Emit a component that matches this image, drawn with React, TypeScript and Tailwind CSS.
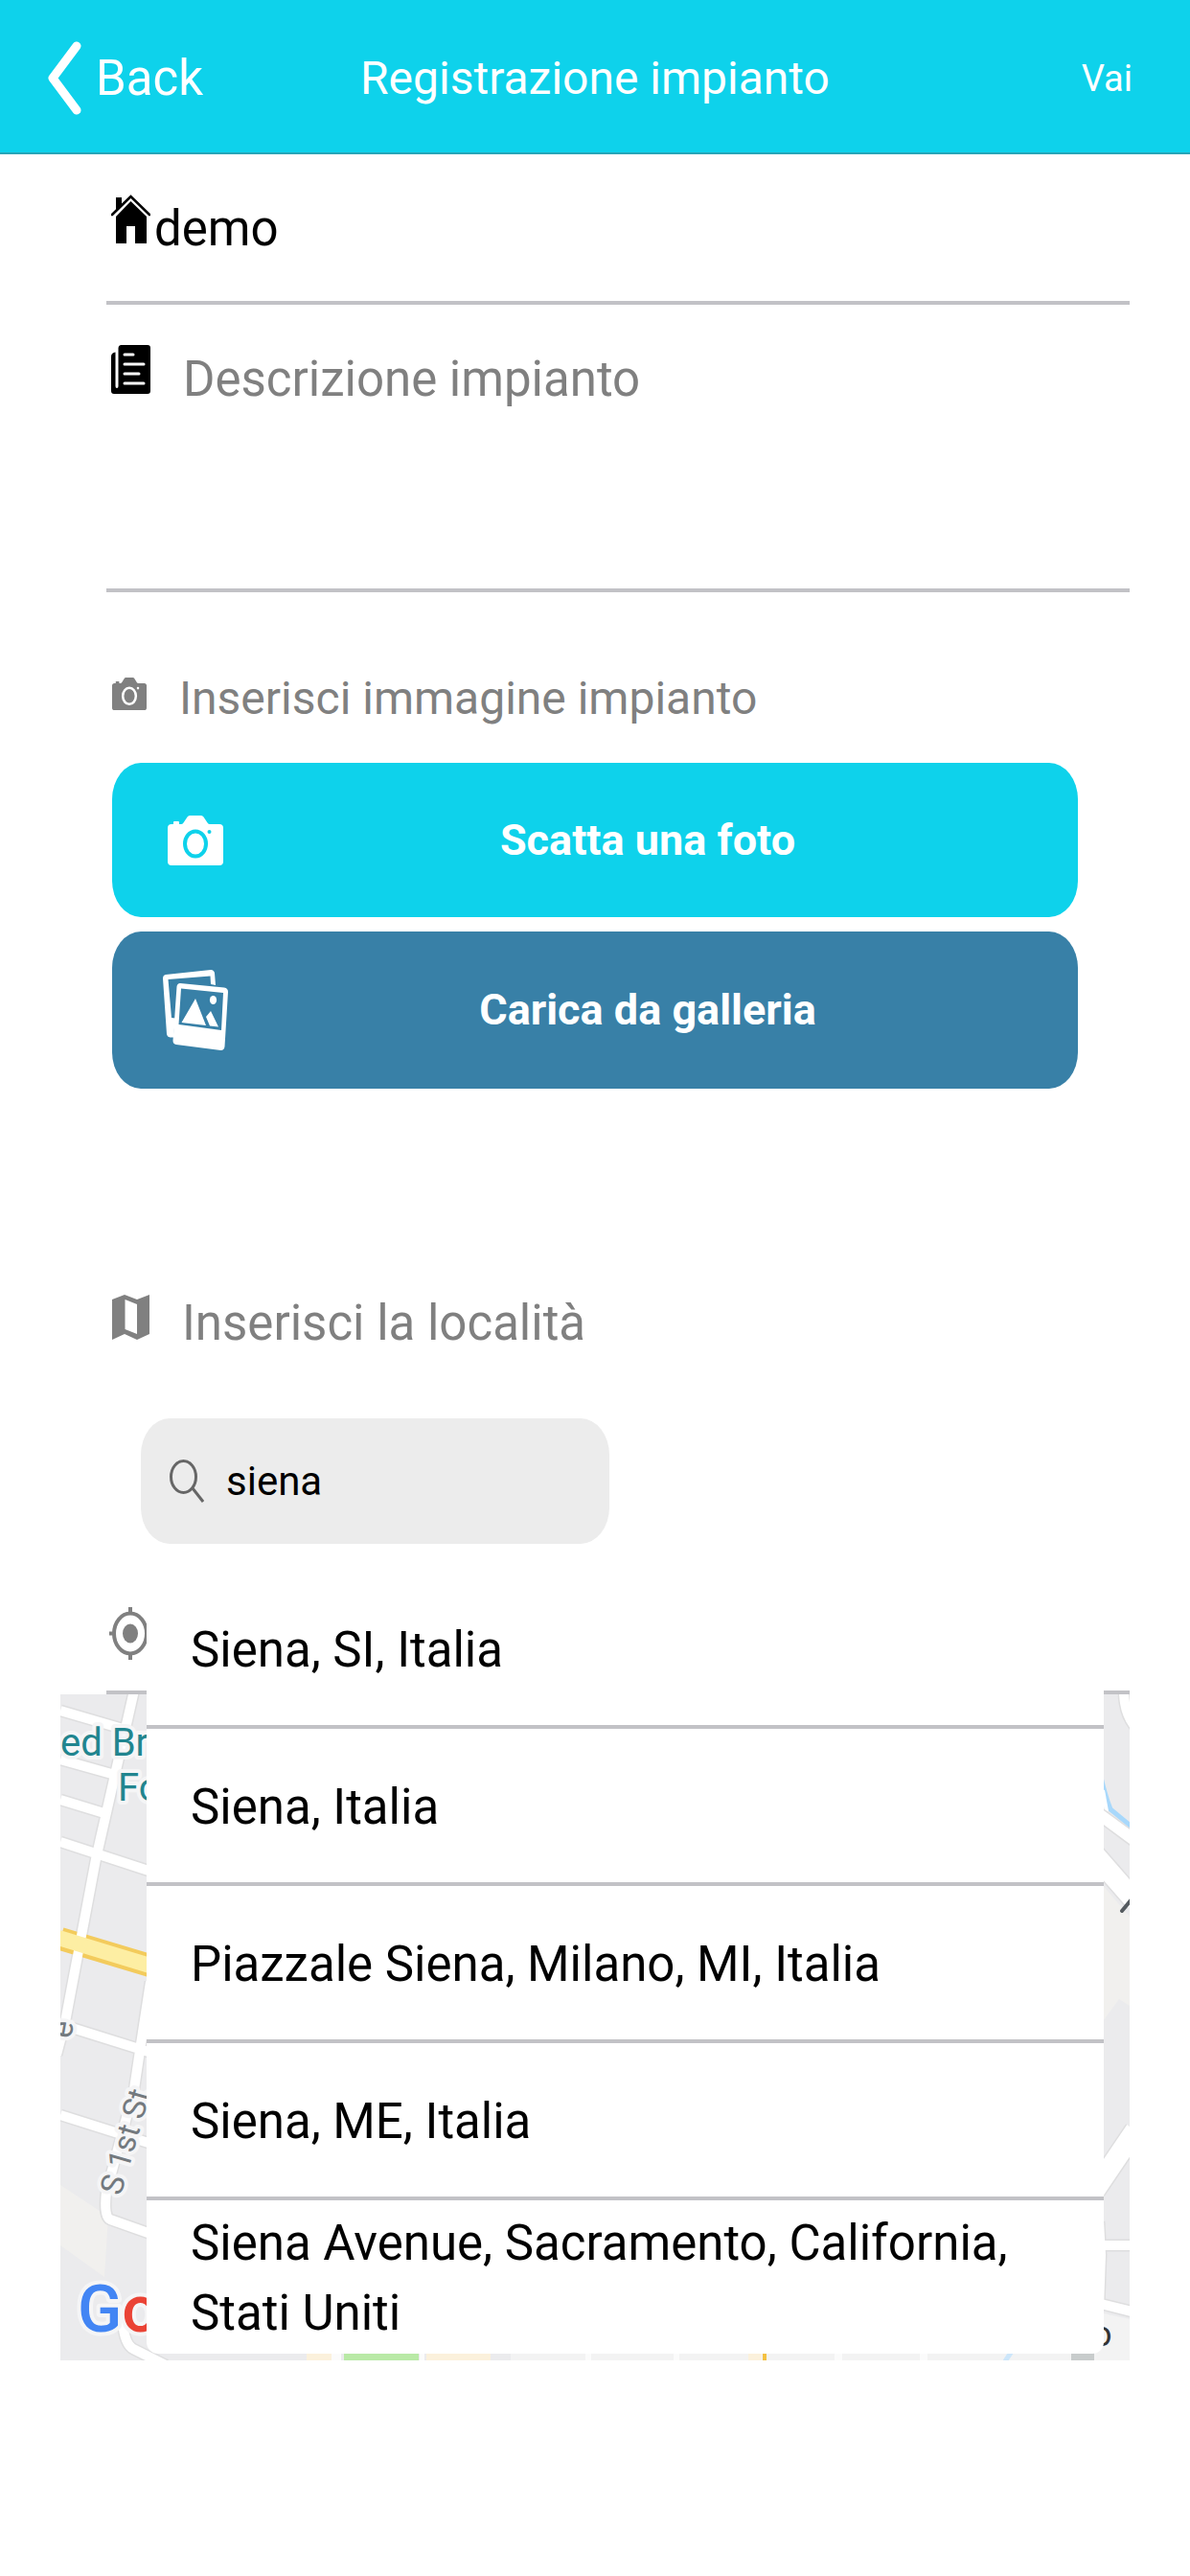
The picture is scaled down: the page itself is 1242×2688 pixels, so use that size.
import { useState } from "react";
import type { ReactNode } from "react";

const results = [
  "Siena, SI, Italia",
  "Siena, Italia",
  "Piazzale Siena, Milano, MI, Italia",
  "Siena, ME, Italia",
  "Siena Avenue, Sacramento, California, Stati Uniti",
];

function Icon({ box, className, children }: { box: string; className: string; children: ReactNode }) {
  return (
    <svg viewBox={box} preserveAspectRatio="none" aria-hidden="true" fill="currentColor" className={`shrink-0 ${className}`}>
      {children}
    </svg>
  );
}

function HomeIcon() {
  return (
    <Icon box="0 0 41 51" className="h-[51px] w-[41px]">
      <path d="M5 3h6v7L5 17z" />
      <path d="M1 21 20.500 2 40 21" fill="none" stroke="currentColor" strokeWidth="2.600" strokeLinecap="round" />
      <path d="M20.500 7 37 23v28H25V33h-9v18H5V23z" />
    </Icon>
  );
}

function DocumentIcon() {
  return (
    <Icon box="0 0 41 51" className="h-[51px] w-[41px]">
      <path d="M10 0h28a3 3 0 0 1 3 3v45a3 3 0 0 1-3 3H3a3 3 0 0 1-3-3V12q0-4 4.500-4.500V43a1.500 2 0 0 0 3 0V3a3 3 0 0 1 2.500-3z" />
      <path d="M14 10h9M14 20h20M14 30h15M14 40h20" stroke="white" strokeWidth="3" strokeLinecap="round" />
    </Icon>
  );
}

function CameraIcon({ className, lens }: { className: string; lens: string }) {
  return (
    <Icon box="0 0 58 52" className={className}>
      <path d="M4 9h2V7q0-1 1-1h4q1 0 1 1v2h2q1.500 0 2.500-1.500l4-6Q21.500 0 23 0h12q1.500 0 2.500 1.500l4 6Q42.500 9 44 9h10q4 0 4 4v35q0 4-4 4H4q-4 0-4-4V13q0-4 4-4z" />
      <ellipse cx="29" cy="29.500" rx="11" ry="13" fill="none" stroke={lens} strokeWidth="4" />
      <circle cx="43.500" cy="17" r="2" fill={lens} />
    </Icon>
  );
}

function GalleryIcon() {
  return (
    <Icon box="0 0 68 84" className="h-[84px] w-[68px]">
      <path
        fillRule="evenodd"
        d="M3 5 50 0q3.500 0 4 3.500L55 16l-5-1-.500-8.500L5.500 10 9 50l4 .500-2 20H7.500Q4.500 70 4 67L0 9q0-3.500 3-4z"
      />
      <path
        fillRule="evenodd"
        d="m18 14 46 4.500q4 .500 4 4.500l-3.500 57q-.500 4-4 4L14 78q-3.500-.500-3.500-4l4-56.500q.500-3.500 3.500-3.500zm1 5.500L16.500 57 61 63l2-39z"
      />
      <path d="M34 30 19.500 55 45 58zM50 43l-5 6 4 9.500 9 1z" />
      <ellipse cx="52.500" cy="31.500" rx="3.600" ry="4.600" />
    </Icon>
  );
}

function MapIcon() {
  return (
    <Icon box="0 0 39 47" className="h-[47px] w-[39px]">
      <path fillRule="evenodd" d="M0 5 13 0l13 5 13-5v41l-13 6-13-6-13 6zM13.500 5v31L26 41V10z" />
    </Icon>
  );
}

function LocateIcon() {
  return (
    <Icon box="0 0 44 55" className="h-[55px] w-[44px]">
      <ellipse cx="22" cy="27.500" rx="17" ry="21" fill="none" stroke="currentColor" strokeWidth="4" />
      <ellipse cx="22" cy="27.500" rx="8" ry="10" />
      <path d="M22 0v7M22 48v7M0 27.500h5M39 27.500h5" stroke="currentColor" strokeWidth="4" />
    </Icon>
  );
}

function SearchIcon() {
  return (
    <Icon box="0 0 36 45" className="h-[45px] w-9 text-[#666]">
      <ellipse cx="14.500" cy="18" rx="13" ry="16.500" fill="none" stroke="currentColor" strokeWidth="3" />
      <path d="m24 30 11 14" stroke="currentColor" strokeWidth="3" />
    </Icon>
  );
}

const streets =
  "M77-4 37 172 5 342-4 376M0 17 72 38M0 68 57 84M0 110 49 125M0 154 95 185M12 348 95 374M94 300 84 365 77 412 48 519Q45 545 52 548L100 565M0 439 95 469M65 655Q67 678 76 683L110 700M1110-4Q1110 20 1122 34";

function MapView() {
  return (
    <svg
      viewBox="0 0 1116 695"
      preserveAspectRatio="xMinYMin slice"
      role="img"
      aria-label="Mappa"
      className="block h-[695px] w-full bg-[#ebebed] font-[Roboto,sans-serif]"
    >
      <path d="M0 512 50 545 46 608 0 575zM1080 190 1116 232V325L1105 318 1080 352z" fill="#f1f0ee" />
      <path d={streets} fill="none" stroke="#dededf" strokeWidth="13" />
      <path d="M0 255 100 285" stroke="#f3cb5c" strokeWidth="24" />
      <path d={streets} fill="none" stroke="white" strokeWidth="10" />
      <path d="M-2 254 100 285" stroke="#fdeea3" strokeWidth="16" />
      <g fill="none">
        <path d="M1085 82Q1090 105 1096 120L1118 138" stroke="#a8d8fb" strokeWidth="5" />
        <path d="M1088 100 1092 122" stroke="white" strokeWidth="4" />
        <path d="M1080 122 1122 153" stroke="#dededf" strokeWidth="15" />
        <path d="M1080 122 1122 153" stroke="white" strokeWidth="12" />
        <path d="M1080 168 1122 216" stroke="#dededf" strokeWidth="24" />
        <path d="M1080 168 1122 216" stroke="white" strokeWidth="21" />
        <path d="M1108 226 1118 214" stroke="#555b60" strokeWidth="4" strokeLinecap="round" />
        <path d="M1082 575h40M1084 550 1086 585 1084 640M1082 635 1122 645" stroke="#dededf" strokeWidth="13" />
        <path d="M1080 517 1122 455" stroke="#dededf" strokeWidth="24" />
        <path d="M1080 517 1122 455" stroke="white" strokeWidth="21" />
        <path d="M1082 575h40M1084 550 1086 585 1084 640M1082 635 1122 645" stroke="white" strokeWidth="10" />
      </g>
      <path d="M470 680H1080V644L1116 652V695H470z" fill="#f3f3f3" />
      <path d="M257 680h26v15h-26zM382 680h67v15h-67zM718 680h14v15h-14z" fill="#fbf1dc" />
      <path d="M296 680h78v15h-78z" fill="#b9e9a6" />
      <path d="M733 680h4v15h-4z" fill="#f4c142" />
      <path d="M283 680h10v15h-10zM375 680h5v15h-5zM548 680h6v15h-6zM640 680h6v15h-6zM808 680h8v15h-8zM897 680h8v15h-8z" fill="#fbfbfb" />
      <path d="m986 696 8-12" stroke="#cde6fa" strokeWidth="5" />
      <path d="M1055 684h24v11h-24z" fill="#c8cccc" />
      <g stroke="#f5f5f6" strokeWidth="8" strokeLinejoin="round" paintOrder="stroke">
        <g fill="#21858f" fontSize="40">
          <text x="0" y="64">ed Br</text>
          <text x="60" y="111">Fo</text>
        </g>
        <g fill="#73797e" fontSize="33">
          <text transform="translate(11 360) rotate(-80)">e</text>
          <text transform="translate(63 524) rotate(-74)">S 1st St</text>
        </g>
        <text x="18" y="665" fontSize="68" fontWeight="500">
          <tspan fill="#4285f4">G</tspan>
          <tspan fill="#ea4335">o</tspan>
        </text>
      </g>
      <text x="1077" y="680" fontSize="36" fill="#333">o</text>
    </svg>
  );
}

export default function App() {
  const [name, setName] = useState("demo");
  const [description, setDescription] = useState("");
  const [query, setQuery] = useState("siena");

  return (
    <div className="min-h-screen bg-white font-[Roboto,sans-serif] text-[51px] leading-[60px] text-black">
      <header className="grid h-[161px] grid-cols-[1fr_auto_1fr] items-center border-b-2 border-[#26a5b8] bg-[#0ed2eb] pt-1 text-white">
        <button type="button" className="ml-[50px] flex items-center gap-[15px] justify-self-start">
          <svg viewBox="0 0 35 77" aria-hidden="true" className="h-[77px] w-[35px]">
            <path d="M30 5 5 38.500 30 72" fill="none" stroke="currentColor" strokeWidth="9" strokeLinecap="round" strokeLinejoin="round" />
          </svg>
          Back
        </button>
        <h1 className="text-[48px]">Registrazione impianto</h1>
        <button type="button" className="mr-[60px] justify-self-end text-[38px]">Vai</button>
      </header>

      <main className="px-[63px]">
        <form className="pl-12" onSubmit={(e) => e.preventDefault()}>
          <div className="flex h-[157px] items-start gap-1 border-b-4 border-[#c2c2c6] pt-[42px] pl-[5px]">
            <HomeIcon />
            <input
              aria-label="Nome impianto"
              value={name}
              onChange={(e) => setName(e.target.value)}
              className="mt-1.5 h-[60px] min-w-0 flex-1 outline-none"
            />
          </div>

          <div className="flex h-[300px] items-start gap-[34px] border-b-4 border-[#c2c2c6] pt-[42px] pl-[5px]">
            <DocumentIcon />
            <textarea
              aria-label="Descrizione impianto"
              placeholder="Descrizione impianto"
              value={description}
              onChange={(e) => setDescription(e.target.value)}
              className="mt-1.5 h-[180px] min-w-0 flex-1 resize-none outline-none placeholder:text-[#808080]"
            />
          </div>

          <h2 className="mt-[81px] flex items-start gap-[34px] pl-[6px] text-[48px] text-[#808080]">
            <CameraIcon className="mt-2 h-[34px] w-9" lens="white" />
            Inserisci immagine impianto
          </h2>

          <div className="mt-[37px] mr-[54px] ml-[6px] flex flex-col gap-[15px] text-[45px] font-bold text-white">
            <button type="button" className="grid h-[161px] grid-cols-[120px_1fr_68px] items-center rounded-[30px/38px] bg-[#0ed2eb] pl-[58px]">
              <CameraIcon className="h-[52px] w-[58px]" lens="#0ed2eb" />
              Scatta una foto
            </button>
            <button type="button" className="grid h-[164px] grid-cols-[120px_1fr_63px] items-center rounded-[30px/38px] bg-[#3880a7] pl-[53px]">
              <GalleryIcon />
              Carica da galleria
            </button>
          </div>

          <label htmlFor="place" className="mt-[215px] flex items-start gap-[34px] pl-[6px] text-[#808080]">
            <MapIcon />
            Inserisci la località
          </label>

          <div className="relative mt-[69px]">
            <div className="ml-9 flex h-[131px] w-[489px] max-w-full items-center gap-[23px] rounded-[30px/38px] bg-[#ececec] pl-[30px]">
              <SearchIcon />
              <input
                id="place"
                type="text"
                value={query}
                onChange={(e) => setQuery(e.target.value)}
                className="min-w-0 flex-1 text-[42px] outline-none"
              />
            </div>

            <ul className="absolute top-full right-[27px] left-[42px] z-10 mt-[29px] divide-y-4 divide-[#c2c2c6] rounded-b-xl bg-white">
              {results.map((place) => (
                <li key={place}>
                  <button type="button" className="flex min-h-40 w-full items-center pt-0.5 pr-10 pl-[46px] text-left leading-[73px]">
                    {place}
                  </button>
                </li>
              ))}
            </ul>
          </div>

          <div className="flex h-[157px] items-start border-b-4 border-[#c2c2c6] pt-[66px] pl-[3px] text-[#808080]">
            <LocateIcon />
          </div>
        </form>

        <MapView />
      </main>
    </div>
  );
}
